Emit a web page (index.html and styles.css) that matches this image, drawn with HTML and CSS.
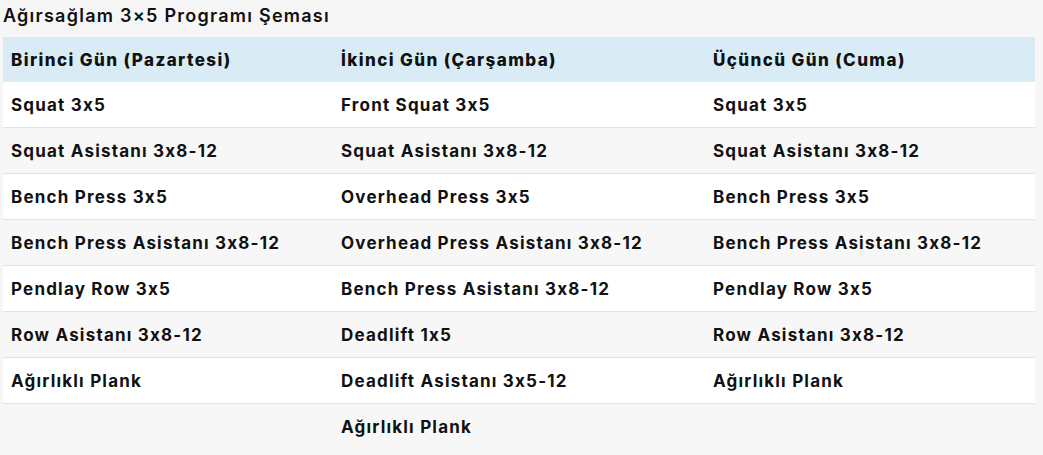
FILE: index.html
```html
<!DOCTYPE html>
<html lang="tr">
<head>
<meta charset="utf-8">
<link rel="stylesheet" href="styles.css">
</head>
<body>
<div class="wrap">
  <h2 class="title">Ağırsağlam 3×5 Programı Şeması</h2>
  <table class="plan">
    <colgroup><col class="c1"><col class="c2"><col class="c3"></colgroup>
    <thead>
      <tr><th>Birinci Gün (Pazartesi)</th><th>İkinci Gün (Çarşamba)</th><th>Üçüncü Gün (Cuma)</th></tr>
    </thead>
    <tbody>
      <tr><td>Squat 3x5</td><td>Front Squat 3x5</td><td>Squat 3x5</td></tr>
      <tr><td>Squat Asistanı 3x8-12</td><td>Squat Asistanı 3x8-12</td><td>Squat Asistanı 3x8-12</td></tr>
      <tr><td>Bench Press 3x5</td><td>Overhead Press 3x5</td><td>Bench Press 3x5</td></tr>
      <tr><td>Bench Press Asistanı 3x8-12</td><td>Overhead Press Asistanı 3x8-12</td><td>Bench Press Asistanı 3x8-12</td></tr>
      <tr><td>Pendlay Row 3x5</td><td>Bench Press Asistanı 3x8-12</td><td>Pendlay Row 3x5</td></tr>
      <tr><td>Row Asistanı 3x8-12</td><td>Deadlift 1x5</td><td>Row Asistanı 3x8-12</td></tr>
      <tr><td>Ağırlıklı Plank</td><td>Deadlift Asistanı 3x5-12</td><td>Ağırlıklı Plank</td></tr>
      <tr><td></td><td>Ağırlıklı Plank</td><td></td></tr>
    </tbody>
  </table>
</div>
</body>
</html>
```
FILE: styles.css
```css
html, body {
  margin: 0;
  padding: 0;
  background: #f6f6f6;
}
body {
  font-family: Inter, "Noto Sans", sans-serif;
  color: #111;
}
.wrap {
  padding: 3px 8px 0 3px;
}
.title {
  margin: 0;
  height: 34px;
  line-height: 26px;
  font-size: 18px;
  font-weight: 600;
  letter-spacing: 1.25px;
}
.plan {
  width: 1032px;
  border-collapse: collapse;
  table-layout: fixed;
  font-size: 17px;
  font-weight: 700;
  letter-spacing: 1.2px;
}
.c1 { width: 330px; }
.c2 { width: 372px; }
.c3 { width: 330px; }
.plan th, .plan td {
  text-align: left;
  padding: 0 8px;
  white-space: nowrap;
}
.plan th {
  background: #d9ecf6;
  height: 45px;
  font-weight: 800;
  letter-spacing: 1.4px;
}
.plan td {
  height: 45px;
  border-bottom: 1px solid #e3e3e3;
}
.plan tbody tr:nth-child(odd) td { background: #ffffff; }
.plan tbody tr:nth-child(even) td { background: #f7f7f7; }
.plan tbody tr:last-child td { border-bottom: none; }
```
